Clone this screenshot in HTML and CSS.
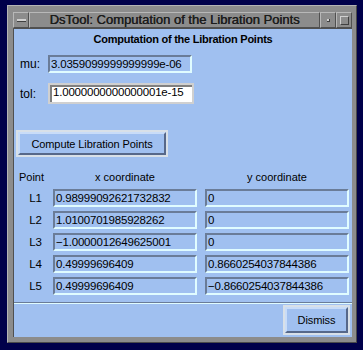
FILE: index.html
```html
<!DOCTYPE html>
<html lang="en">
<head>
    <meta charset="UTF-8">
    <title>DsTool: Computation of the Libration Points</title>
    <link rel="stylesheet" href="styles.css">
</head>
<body>
<div class="window">
    <div class="titlebar">
        <div class="tb-btn menu-btn"><span class="bar"></span></div>
        <div class="tb-title">DsTool: Computation of the Libration Points</div>
        <div class="tb-btn min-btn"><span class="dot"></span></div>
        <div class="tb-btn max-btn"><span class="box"></span></div>
    </div>

    <div class="content">
        <h1>Computation of the Libration Points</h1>

        <div class="param">
            <span class="plabel">mu:</span>
            <div class="field ro wide">3.0359099999999999e-06</div>
        </div>
        <div class="param tol">
            <span class="plabel">tol:</span>
            <div class="field edit">1.0000000000000001e-15</div>
        </div>

        <div class="btn-wrap compute">
            <button class="btn">Compute Libration Points</button>
        </div>

        <div class="points">
            <div class="hd pt">Point</div>
            <div class="hd">x coordinate</div>
            <div class="hd">y coordinate</div>

            <div class="pt">L1</div>
            <div class="field ro">0.98999092621732832</div>
            <div class="field ro">0</div>

            <div class="pt">L2</div>
            <div class="field ro">1.0100701985928262</div>
            <div class="field ro">0</div>

            <div class="pt">L3</div>
            <div class="field ro">&minus;1.0000012649625001</div>
            <div class="field ro">0</div>

            <div class="pt">L4</div>
            <div class="field ro">0.49999696409</div>
            <div class="field ro">0.8660254037844386</div>

            <div class="pt">L5</div>
            <div class="field ro">0.49999696409</div>
            <div class="field ro">&minus;0.8660254037844386</div>
        </div>

        <div class="footer">
            <div class="btn-wrap">
                <button class="btn dismiss">Dismiss</button>
            </div>
        </div>
    </div>
</div>
</body>
</html>
```

FILE: styles.css
```css
body { margin: 0; background-color: #00004a; font-family: "Liberation Sans", Arial, sans-serif; }

.window {
    margin: 5px 0 0 7px;
    width: 350px;
    height: 338px;
    box-sizing: border-box;
    background-color: #8c8c8c;
    border-top: 1px solid #b4b4b4;
    border-left: 1px solid #b4b4b4;
    border-right: 1px solid #4a4a4a;
    border-bottom: 1px solid #4a4a4a;
    padding: 6px 4px 5px 5px;
    display: flex;
    flex-direction: column;
}

/* title bar */
.titlebar { display: flex; height: 16px; }
.tb-btn, .tb-title {
    box-sizing: border-box;
    background-color: #8c8c8c;
    border-top: 1px solid #b8b8b8;
    border-left: 1px solid #b8b8b8;
    border-right: 1px solid #505050;
    border-bottom: 1px solid #505050;
}
.tb-btn { width: 16px; display: flex; align-items: center; justify-content: center; }
.tb-title {
    flex: 1;
    text-align: center;
    font-size: 13px;
    line-height: 14px;
    color: #1c1c1c;
    text-shadow: 0.4px 0 0 #1c1c1c;
    white-space: nowrap;
    overflow: hidden;
}
.menu-btn .bar { width: 9px; height: 2px; background: #d0d0d0; border-bottom: 1px solid #404040; }
.min-btn .dot { width: 2px; height: 2px; background: #d0d0d0; border-right: 1px solid #404040; border-bottom: 1px solid #404040; }
.max-btn .box {
    width: 7px; height: 7px;
    border-top: 1px solid #d0d0d0; border-left: 1px solid #d0d0d0;
    border-right: 1px solid #404040; border-bottom: 1px solid #404040;
}

/* client area */
.content {
    flex: 1;
    background-color: #a0c0f0;
    border-left: 1px solid #505050;
    border-top: 1px solid #505050;
    font-size: 11px;
    color: #000;
    position: relative;
}
h1 {
    margin: 3px 0 0;
    font-size: 11px;
    letter-spacing: -0.25px;
    line-height: 14px;
    text-align: center;
}

.param { display: flex; align-items: center; margin-top: 9px; padding-left: 6px; }
.param.tol { margin-top: 10px; }
.plabel { width: 28px; font-size: 12px; }

.field {
    box-sizing: border-box;
    height: 18px;
    line-height: 14px;
    padding: 0 1px;
    font-size: 11.5px;
    letter-spacing: -0.2px;
    white-space: nowrap;
    overflow: hidden;
}
.field.ro {
    background-color: #a0c0f0;
    border-top: 2px solid #6a7c98;
    border-left: 2px solid #6a7c98;
    border-right: 2px solid #e0fcff;
    border-bottom: 2px solid #e0fcff;
}
.field.wide { width: 144px; }
.field.edit {
    width: 146px;
    height: 21px;
    line-height: 15px;
    background-color: #fff;
    border: 2px solid #d0d0d0;
    box-shadow: inset 2px 2px 0 #808080;
    padding: 0 0 0 3px;
}

.btn-wrap {
    display: inline-block;
    padding: 2px;
    background-color: #d8e0e8;
}
.compute { margin: 26px 0 0 2px; }
.btn {
    display: block;
    font-family: "Liberation Sans", Arial, sans-serif;
    font-size: 11px;
    letter-spacing: -0.1px;
    color: #000;
    background-color: #a0c0f0;
    border-top: 2px solid #c8dcf8;
    border-left: 2px solid #c8dcf8;
    border-right: 2px solid #56688a;
    border-bottom: 2px solid #56688a;
    margin: 0;
    width: 148px;
    height: 23px;
    padding: 0;
}

.points {
    display: grid;
    grid-template-columns: 31px 144px 144px;
    column-gap: 8px;
    row-gap: 4px;
    margin-top: 13px;
    align-items: center;
}
.hd { text-align: center; font-size: 11px; line-height: 14px; margin-bottom: 1px; }
.pt { text-align: right; font-size: 11.5px; padding-right: 3px; }
.hd.pt { text-align: right; font-size: 11px; padding-right: 1px; }

.footer {
    position: absolute;
    left: 0; right: 0; bottom: 0;
    height: 34px;
    border-top: 1px solid #6a7c98;
    box-shadow: inset 0 1px 0 #e0fcff;
    display: flex;
    justify-content: flex-end;
    align-items: center;
    padding-right: 2px;
}
.btn.dismiss { width: 63px; height: 26px; }
```
